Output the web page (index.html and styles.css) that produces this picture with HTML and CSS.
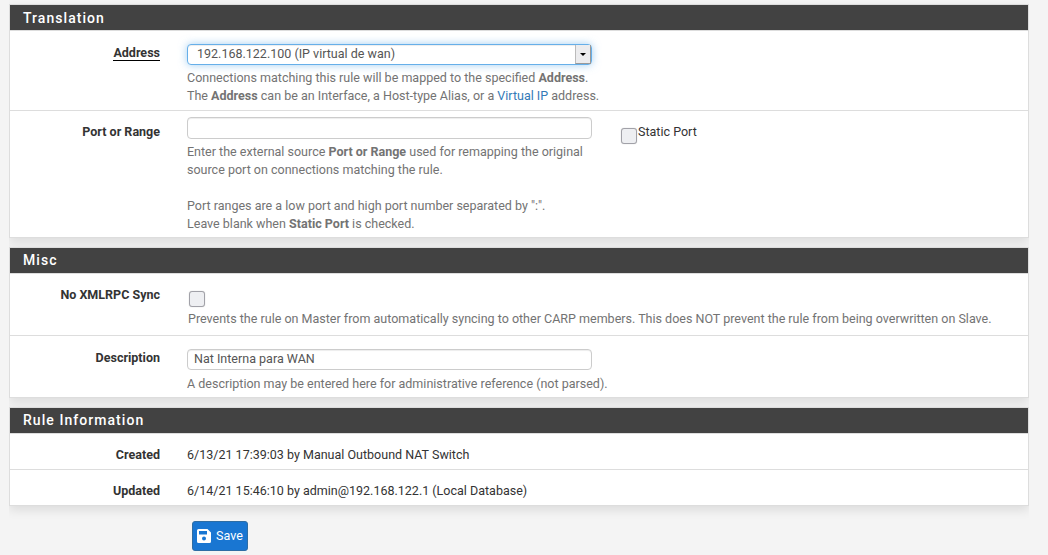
FILE: index.html
```html
<!DOCTYPE html>
<html lang="en">
<head>
<meta charset="utf-8">
<title>Outbound NAT: Edit</title>
<link rel="stylesheet" href="styles.css">
</head>
<body>
<form class="page">
  <section class="panel translation">
    <h2 class="panel-heading">Translation</h2>
    <div class="row row-address">
      <label class="label"><span class="required">Address</span></label>
      <div class="field">
        <div class="control select focused"><span>192.168.122.100 (IP virtual de wan)</span><span class="select-button"><svg width="6" height="3" viewBox="0 0 6 3"><path d="M0 0h6L3 3z"/></svg></span></div>
        <p class="help">Connections matching this rule will be mapped to the specified <b>Address</b>.<br>The <b>Address</b> can be an Interface, a Host-type Alias, or a <a href="#">Virtual IP</a> address.</p>
      </div>
    </div>
    <div class="row row-port">
      <label class="label">Port or Range</label>
      <div class="field field-input">
        <div class="control"></div>
        <p class="help">Enter the external source <b>Port or Range</b> used for remapping the original<br>source port on connections matching the rule.<br><br>Port ranges are a low port and high port number separated by ":".<br>Leave blank when <b>Static Port</b> is checked.</p>
      </div>
      <div class="static-port"><span class="checkbox"></span><span>Static Port</span></div>
    </div>
  </section>
  <section class="panel misc">
    <h2 class="panel-heading">Misc</h2>
    <div class="row row-sync">
      <label class="label">No XMLRPC Sync</label>
      <div class="field">
        <span class="checkbox"></span>
        <p class="help">Prevents the rule on Master from automatically syncing to other CARP members. This does NOT prevent the rule from being overwritten on Slave.</p>
      </div>
    </div>
    <div class="row row-description">
      <label class="label">Description</label>
      <div class="field">
        <div class="control">Nat Interna para WAN</div>
        <p class="help">A description may be entered here for administrative reference (not parsed).</p>
      </div>
    </div>
  </section>
  <section class="panel information">
    <h2 class="panel-heading">Rule Information</h2>
    <div class="row row-info">
      <label class="label">Created</label>
      <div class="field">6/13/21 17:39:03 by Manual Outbound NAT Switch</div>
    </div>
    <div class="row row-info">
      <label class="label">Updated</label>
      <div class="field">6/14/21 15:46:10 by admin@192.168.122.1 (Local Database)</div>
    </div>
  </section>
  <button class="save" type="button"><svg width="14" height="14" viewBox="0 0 14 14"><path fill="#fff" fill-rule="evenodd" d="M1.500 0h9L14 3.500v9q0 1.500-1.500 1.500h-11Q0 14 0 12.500v-11Q0 0 1.500 0zM2 2v3.500h8V2zM7 7.500a2 2 0 1 0 0 4 2 2 0 0 0 0-4z"/></svg><span>Save</span></button>
</form>
</body>
</html>
```
FILE: styles.css
```css
* { box-sizing: border-box; }
body {
  margin: 0;
  height: 555px;
  overflow: hidden;
  background: #f4f4f4;
  color: #333;
  font: 12.53px/18px Roboto, sans-serif;
}
.page {
  width: 1020px;
  margin-left: 9px;
  padding-top: 4px;
  clip-path: inset(0);
}
.panel {
  width: 1020px;
  margin-bottom: 9px;
  background: #fff;
  border: 1px solid #ddd;
  box-shadow: 0 4px 10px rgba(0, 0, 0, .1);
}
.translation { height: 234px; }
.misc { height: 151px; }
.information { height: 99px; }
.panel-heading {
  height: 26px;
  margin: 0;
  padding-left: 13px;
  background: #424242;
  border-bottom: 1px solid #ddd;
  color: #fff;
  font-size: 14px;
  font-weight: 500;
  line-height: 24px;
  letter-spacing: 1.05px;
}
.translation .panel-heading { line-height: 26px; }
.row { display: flex; }
.row + .row { border-top: 1px solid #ddd; }
.label {
  width: 150px;
  margin-right: 27px;
  flex: none;
  text-align: right;
  font-weight: 700;
}
.required { display: inline-block; height: 17px; border-bottom: 1px solid #000; }
.field { flex: none; }
.field-input { width: 405px; }
.control {
  width: 405px;
  height: 22px;
  padding: 0 6px;
  border: 1px solid #ccc;
  border-radius: 4px;
  background: #fff;
  box-shadow: inset 0 1px 1px rgba(0, 0, 0, .075);
  color: #555;
  line-height: 18px;
}
.row-address .control, .row-description .control { height: 21px; }
.select { display: flex; justify-content: space-between; padding: 0 0 0 9px; }
.focused { border-color: #66afe9; box-shadow: inset 0 1px 1px rgba(0, 0, 0, .075), 0 0 8px rgba(102, 175, 233, .6); }
.select-button {
  display: flex;
  align-items: center;
  justify-content: center;
  width: 16px;
  border: solid #999;
  border-width: 0 1px 1px;
  border-left-color: #bbb;
  background: #ececee;
}
.help { margin: 0; color: #737373; white-space: nowrap; }
.help a { color: #337ab7; text-decoration: none; }
.checkbox {
  display: block;
  flex: none;
  width: 16px;
  height: 16px;
  border: 1px solid #a1a1a8;
  border-radius: 3px;
  background: #eeeff2;
  box-shadow: 0 0 1px #bbb;
}
.row-address { height: 79px; padding-top: 13px; }
.row-address .help { margin-top: 4px; }
.row-port { padding-top: 6px; }
.row-port .label { padding-top: 6px; }
.row-port .help { margin-top: 4px; }
.static-port { display: flex; margin-left: 29px; padding-top: 6px; }
.static-port .checkbox { margin: 5px 1px 0 0; }
.row-sync { height: 61px; padding-top: 12px; }
.row-sync .checkbox { margin: 5px 0 0 2px; }
.row-sync .help { margin: 3px 0 0 1px; }
.row-description { padding-top: 13px; }
.row-description .help { margin-top: 5px; }
.row-info { height: 35px; padding-top: 12px; }
.row-info + .row-info { height: 36px; }
.save {
  display: flex;
  align-items: center;
  gap: 5px;
  width: 56px;
  height: 30px;
  margin: 15px 0 0 183px;
  padding: 0 4px;
  border: 1px solid #2e6da4;
  border-radius: 3px;
  background: #1976d2;
  color: #fff;
  font: inherit;
}
.save svg { flex: none; }
```
